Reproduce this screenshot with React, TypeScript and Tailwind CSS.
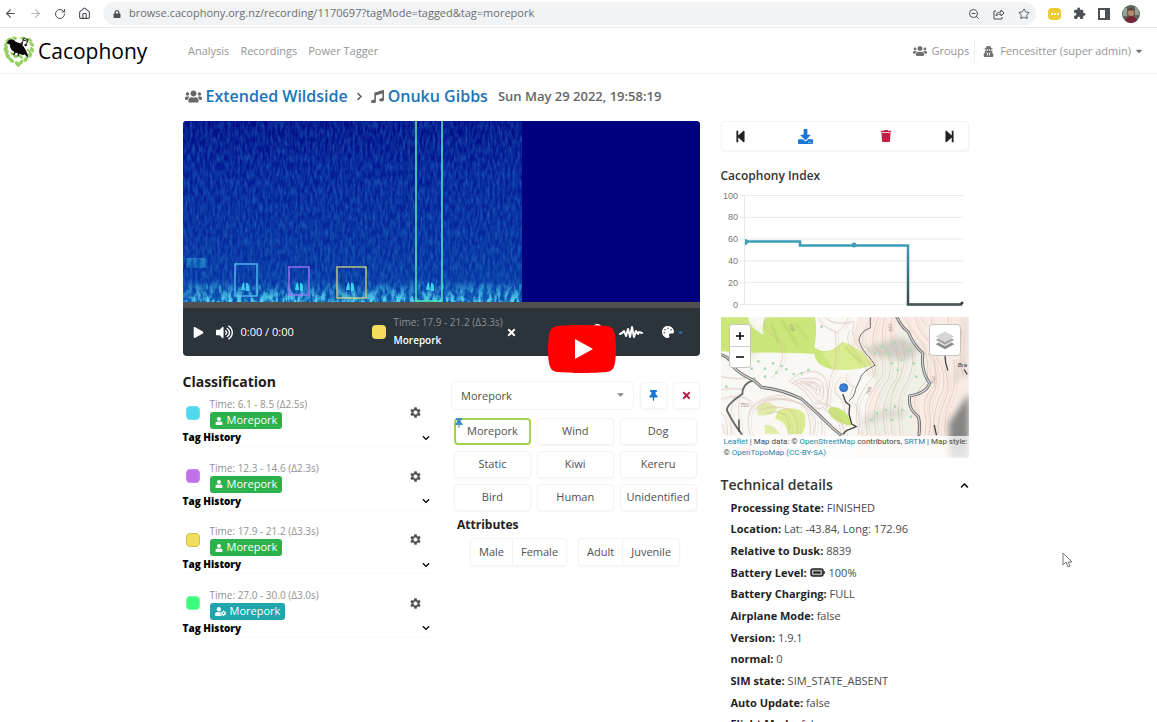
import { useState } from "react";
import { ArrowLeft, ArrowRight, House, RotateCw, Star, ZoomOut } from "lucide-react";
import {
  FaCaretDown,
  FaChevronDown,
  FaChevronRight,
  FaChevronUp,
  FaDownload,
  FaLock,
  FaMusic,
  FaPalette,
  FaPlay,
  FaSearch,
  FaStepBackward,
  FaStepForward,
  FaThumbtack,
  FaTimes,
  FaTrash,
  FaUser,
  FaUserCog,
  FaUserSecret,
  FaUsers,
  FaVolumeUp,
} from "react-icons/fa";
import { MdExtension, MdMoreVert, MdSettings } from "react-icons/md";

type Track = {
  time: string;
  swatch: string;
  badge: string;
  automatic?: boolean;
};

const tracks: Track[] = [
  { time: "6.1 - 8.5 (Δ2.5s)", swatch: "bg-[#4fd8ee] border-[#6adff2]", badge: "bg-[#2bb24a]" },
  { time: "12.3 - 14.6 (Δ2.3s)", swatch: "bg-[#c170ea] border-[#c984ec]", badge: "bg-[#2bb24a]" },
  { time: "17.9 - 21.2 (Δ3.3s)", swatch: "bg-[#f3dd5c] border-[#c9c34c]", badge: "bg-[#2bb24a]" },
  { time: "27.0 - 30.0 (Δ3.0s)", swatch: "bg-[#3dfc7c] border-[#74fca2]", badge: "bg-[#22a5ad]", automatic: true },
];

const tags = ["Morepork", "Wind", "Dog", "Static", "Kiwi", "Kereru", "Bird", "Human", "Unidentified"];

const attributes = [
  ["Male", "Female"],
  ["Adult", "Juvenile"],
];

const details = [
  ["Processing State", "FINISHED"],
  ["Location", "Lat: -43.84, Long: 172.96"],
  ["Relative to Dusk", "8839"],
  ["Battery Level", "100%"],
  ["Battery Charging", "FULL"],
  ["Airplane Mode", "false"],
  ["Version", "1.9.1"],
  ["normal", "0"],
  ["SIM state", "SIM_STATE_ABSENT"],
  ["Auto Update", "false"],
  ["Flight Mode", "false"],
];

function BrowserBar() {
  return (
    <div className="flex h-7 shrink-0 items-center border-b border-[#e6e8ea] bg-white text-[#4d5156]">
      <div className="flex w-[103px] items-center gap-3 pl-1">
        <button aria-label="Back"><ArrowLeft size={13} /></button>
        <button aria-label="Forward" className="text-[#b4b7ba]"><ArrowRight size={13} /></button>
        <button aria-label="Reload"><RotateCw size={12} /></button>
        <button aria-label="Home"><House size={13} /></button>
      </div>
      <div className="flex h-[23px] flex-1 items-center rounded-full bg-[#f1f3f4] pr-[6px] pl-[10px]">
        <FaLock size={8} />
        <input
          aria-label="Address"
          className="ml-2 h-5 flex-1 bg-transparent pb-px text-[11px] leading-5 text-[#6b6f73] outline-none"
          defaultValue="browse.cacophony.org.nz/recording/1170697?tagMode=tagged&tag=morepork"
        />
        <div className="flex items-center gap-[13px]">
          <ZoomOut size={12} />
          <svg viewBox="0 0 12 12" className="size-3" fill="none" stroke="currentColor" strokeLinejoin="round">
            <path d="M3 3H1v8h8V9" />
            <path d="M3 8q0-4 5-4V2l3 3-3 3V6Q5 6 3 8z" />
          </svg>
          <Star size={12} />
        </div>
      </div>
      <div className="flex w-[121px] items-center gap-3 overflow-hidden pl-3">
        <span className="flex h-3 w-[13px] shrink-0 items-center justify-center gap-px rounded-sm bg-[#eccb35]">
          <i className="size-[2px] bg-white" />
          <i className="size-[2px] bg-white" />
          <i className="size-[2px] bg-white" />
        </span>
        <MdExtension size={13} className="shrink-0" />
        <svg viewBox="0 0 12 12" className="size-3 shrink-0">
          <path d="M1 1h10v10H1z" fill="none" stroke="currentColor" strokeWidth="2" />
          <path d="M7 1h4v10H7z" fill="currentColor" />
        </svg>
        <svg viewBox="0 0 18 18" className="size-[18px] shrink-0">
          <clipPath id="avatar"><circle cx="9" cy="9" r="9" /></clipPath>
          <g clipPath="url(#avatar)">
            <path d="M0 0h18v18H0z" fill="#59645a" />
            <path d="M1 3h4v8H1zM13 2h4v8h-4z" fill="#97a18f" />
            <path d="M3 18c0-5 3-7 6-7s6 2 6 7z" fill="#7c2437" />
            <ellipse cx="9" cy="7" rx="3" ry="4" fill="#b98573" />
            <path d="M6 6c0-4 6-4 6 0l-3-1z" fill="#54382f" />
          </g>
        </svg>
        <MdMoreVert size={14} className="shrink-0" />
      </div>
    </div>
  );
}

function Logo() {
  return (
    <a href="#home" className="flex w-[184px] items-center gap-[3px] pl-[3px] text-black">
      <svg viewBox="0 0 96 96" className="size-8">
        <g fill="#93d05f" stroke="#93d05f" strokeWidth="3" strokeLinejoin="round">
          <path d="M8 18q10-12 18-8q-4 9-18 8M4 32q2-12 12-12q2 10-12 12M4 48q-4-12 8-16q6 10-8 16M10 60q-8-8 0-18q12 8 0 18M20 72Q8 70 9 57q14 0 11 15M32 82q-14 0-13-12q12-1 13 12M70 12q10-6 18 6q-14 3-18-6M80 22q12 0 12 12q-12-2-12-12M84 36q10 4 6 16q-11-4-6-16M82 50q8 8 0 18q-10-9 0-18M74 64q4 12-10 16q-2-12 10-16M60 74q2 10-10 16q-6-10 10-16M38 80q12 0 10 15q-12-3-10-15M28 7q10-4 14 4q-8 6-14-4M52 10q8-8 15-1q-6 8-15 1" />
          <path d="M30 62q10-6 14 4q-8 6-14-4M48 60q10 0 10 9q-9 2-10-9M22 54q8-4 12 4q-8 4-12-4M72 42q6 0 8 8q-8 0-8-8" />
        </g>
        <path
          d="M12 22q4-8 13-9q8 0 13 7q14 3 22 12q6 8 11 19q4 8 5 17l-12-10q-3 3-7 1l-8-3-3 9-3-1 2-9-7-2-5 8-3-1 4-9q-15-10-13-22l-9-5z"
          fill="#080808"
        />
        <path d="M58 24l4-14 13 4-5 15M60 15l13 4" fill="none" stroke="#222" strokeWidth="3" />
        <circle cx="56" cy="26" r="4" fill="#222" />
        <circle cx="68" cy="30" r="4" fill="#222" />
      </svg>
      <span className="text-[21px] leading-8 font-medium">Cacophony</span>
    </a>
  );
}

function Navbar() {
  return (
    <nav className="flex h-[46px] shrink-0 items-center border-b border-[#f1f1f1] pt-px text-[11px] text-[#969696]">
      <Logo />
      <div className="flex flex-1 gap-[11px] pl-1">
        <a href="#analysis">Analysis</a>
        <a href="#recordings">Recordings</a>
        <a href="#tagger">Power Tagger</a>
      </div>
      <div className="flex items-center pr-[13px]">
        <a href="#groups" className="flex items-center gap-1 border-r border-[#eeeeee] py-1 pr-[5px]">
          <FaUsers size={14} className="text-[#707070]" />
          Groups
        </a>
        <button className="flex items-center pl-2">
          <FaUserSecret size={11} className="mr-[6px] text-[#707070]" />
          Fencesitter (super admin)
          <FaCaretDown size={10} className="ml-[3px] text-[#777]" />
        </button>
      </div>
    </nav>
  );
}

// Faint calls outside the tagged regions, as [x, height]
const strayCalls = [
  [14, 5],
  [24, 6],
  [37, 5],
  [77, 5],
  [151, 6],
  [198, 5],
  [236, 6],
  [260, 6],
  [299, 7],
  [337, 7],
];

function Spectrogram() {
  return (
    <svg viewBox="0 0 517 181" preserveAspectRatio="none" className="block h-[181px] w-full">
      <defs>
        <filter id="streaks" x="0" y="0" width="1" height="1">
          <feTurbulence type="fractalNoise" baseFrequency="0.4 0.12" numOctaves="2" seed="4" />
          <feColorMatrix values="0 0 0 0 0.04  0 0 0 0 0.36  0 0 0 0 0.75  1.8 0 0 0 -0.55" />
        </filter>
        <filter id="floor" x="0" y="0" width="1" height="1">
          <feTurbulence type="fractalNoise" baseFrequency="0.22 0.1" numOctaves="3" seed="9" />
          <feColorMatrix values="0 0 0 0 0.1  0 0 0 0 0.7  0 0 0 0 0.88  4 0 0 0 -1.6" />
        </filter>
        <linearGradient id="sky" x1="0" y1="0" x2="0" y2="1">
          <stop offset="0" stopColor="#010a84" />
          <stop offset="0.25" stopColor="#031a94" />
          <stop offset="0.6" stopColor="#05279c" />
          <stop offset="0.9" stopColor="#0432a2" />
          <stop offset="1" stopColor="#0753ae" />
        </linearGradient>
        <linearGradient id="rise" x1="0" y1="0" x2="0" y2="1">
          <stop offset="0" stopColor="#000" />
          <stop offset="1" stopColor="#fff" />
        </linearGradient>
        <mask id="floorMask">
          <rect y="158" width="339" height="23" fill="url(#rise)" />
        </mask>
      </defs>
      <rect width="517" height="181" fill="#00007f" />
      <rect width="339" height="181" fill="url(#sky)" />
      <rect width="339" height="181" filter="url(#streaks)" opacity="0.4" />
      <g mask="url(#floorMask)">
        <rect y="156" width="339" height="25" filter="url(#floor)" />
      </g>
      <rect x="3" y="137" width="21" height="10" rx="3" fill="#1476c0" opacity="0.5" />
      <rect x="3" y="137" width="21" height="10" filter="url(#floor)" opacity="0.3" />
      <g fill="#1f9dd0" opacity="0.8">
        {strayCalls.map(([x, h]) => (
          <ellipse key={x} cx={x} cy="166" rx="1" ry={h / 2} />
        ))}
      </g>
      {[62, 116, 167, 247].map((x) => (
        <g key={x} fill="#39d3ee">
          <path d={`M${x - 4} 169q1-7 3-8l1 8zM${x + 1} 162q2-1 3 3v5h-3z`} />
        </g>
      ))}
      <g fill="none" strokeWidth="1.3">
        <rect x="52" y="143" width="22" height="32" stroke="#5cc5f4" />
        <rect x="106" y="146" width="20" height="28" stroke="#a678f5" />
        <rect x="154" y="146" width="29" height="31" stroke="#d8d77b" />
        <rect x="233" y="-4" width="26" height="184" stroke="#50e3b4" strokeWidth="1.6" />
      </g>
    </svg>
  );
}

function Player() {
  return (
    <div className="relative">
      <div className="overflow-hidden rounded bg-[#2b333b]">
        <Spectrogram />
        <div className="h-1.5 bg-[#505050]" />
        <div className="flex h-12 items-center pr-[15px] pl-[10px] text-white">
          <div className="flex w-[179px] items-center gap-3">
            <button aria-label="Play"><FaPlay size={11} /></button>
            <button aria-label="Mute"><FaVolumeUp size={17} /></button>
            <span className="-ml-1 text-[11px]">0:00 / 0:00</span>
          </div>
          <span className="size-[14px] rounded-sm bg-[#f6dc5c]" />
          <div className="ml-2 w-[110px] pb-0.5 text-[10px] leading-[18px]">
            <p className="whitespace-nowrap text-[#8b9095]">Time: 17.9 - 21.2 (Δ3.3s)</p>
            <p className="font-semibold">Morepork</p>
          </div>
          <button aria-label="Deselect" className="ml-0.5"><FaTimes size={11} /></button>
          <div className="ml-auto flex items-center">
            <button aria-label="Zoom" className="mr-[14px] mb-1"><FaSearch size={13} /></button>
            <button aria-label="Waveform" className="mr-[19px]">
              <svg viewBox="0 0 24 14" className="h-[14px] w-6" fill="none" stroke="currentColor" strokeWidth="2" strokeLinejoin="round" strokeLinecap="round">
                <path d="M1 9l2-1 2-2 2 5 2-7 2 8 2-10 2 10 2-6 2 3 1-2 3 1" />
              </svg>
            </button>
            <button aria-label="Colour map" className="flex items-center gap-0.5">
              <FaPalette size={12} />
              <FaCaretDown size={9} className="text-[#2f6da8]" />
            </button>
          </div>
        </div>
      </div>
      <button aria-label="Play video" className="absolute right-[84px] -bottom-[17px] h-12 w-[68px]">
        <svg viewBox="0 0 68 48" className="h-full w-full">
          <path
            d="M66.5 7.7c-.8-2.9-2.5-5.4-5.4-6.2C55.8.1 34 0 34 0S12.2.1 6.9 1.5C4 2.3 2.3 4.8 1.5 7.7.1 13.1 0 24 0 24s.1 10.900 1.500 16.300c.8 2.900 2.500 5.400 5.400 6.200C12.200 47.900 34 48 34 48s21.800-.1 27.100-1.500c2.900-.8 4.600-3.300 5.400-6.200C67.900 34.900 68 24 68 24s-.1-10.900-1.500-16.300z"
            fill="#f00"
          />
          <path d="M45 24 27 14v20" fill="#fff" />
        </svg>
      </button>
    </div>
  );
}

function Classification() {
  return (
    <section>
      <h2 className="text-sm leading-5 font-bold text-[#1c1c1c]">Classification</h2>
      <ul className="grid h-[254px] auto-rows-fr">
        {tracks.map((track) => (
          <li key={track.time} className="pt-1">
            <div className="flex items-center">
              <span className={`ml-[3px] size-[14px] rounded-sm border ${track.swatch}`} />
              <div className="ml-[10px] flex-1">
                <p className="text-[10px] leading-4 text-[#929292]">Time: {track.time}</p>
                <p className={`flex h-[17px] w-fit items-center gap-1 rounded-[3px] px-[5px] text-[11px] text-white ${track.badge}`}>
                  {track.automatic ? <FaUserCog size={11} /> : <FaUser size={8} />}
                  Morepork
                </p>
              </div>
              <button aria-label="Track settings" className="mr-[9px] text-[#555]">
                <MdSettings size={13} />
              </button>
            </div>
            <button className="flex h-[18px] w-full items-center justify-between border-b border-[#fafafa] pr-px text-[10px] font-extrabold text-black">
              Tag History
              <FaChevronDown size={8} />
            </button>
          </li>
        ))}
      </ul>
    </section>
  );
}

function Tagger() {
  const [selected, setSelected] = useState("Morepork");

  return (
    <section className="text-[11px] text-[#505050]">
      <div className="flex items-center gap-1.5">
        <div className="relative flex-1">
          <select
            aria-label="Species"
            value={selected}
            onChange={(e) => setSelected(e.target.value)}
            className="h-[29px] w-full appearance-none rounded border border-[#f4f4f4] bg-white pl-[9px] leading-5"
          >
            {tags.map((tag) => (
              <option key={tag}>{tag}</option>
            ))}
          </select>
          <FaCaretDown size={11} className="pointer-events-none absolute top-2 right-2 text-[#888]" />
        </div>
        <button aria-label="Pin tag" className="flex size-[27px] items-center justify-center rounded border border-[#f4f4f4] text-[#1777d1] shadow-xs">
          <FaThumbtack size={11} />
        </button>
        <button aria-label="Remove tag" className="flex size-[27px] items-center justify-center rounded border border-[#f4f4f4] text-[#b81f45] shadow-xs">
          <FaTimes size={11} />
        </button>
      </div>

      <div className="mt-2 grid grid-cols-3 gap-1.5 px-[3px]">
        {tags.map((tag) => (
          <button
            key={tag}
            onClick={() => setSelected(tag)}
            className={`relative h-[27px] rounded ${
              tag === selected ? "border-2 border-[#a5d14f]" : "border border-[#f3f3f3] shadow-xs"
            }`}
          >
            {tag === "Morepork" && (
              <FaThumbtack size={10} className="absolute -top-[2px] -left-[2px] text-[#3f93bd]" />
            )}
            {tag}
          </button>
        ))}
      </div>

      <h3 className="mt-1 pl-1.5 text-xs leading-5 font-bold text-[#222]">Attributes</h3>
      <div className="mt-[3px] flex gap-[11px] pl-[19px]">
        {attributes.map((group) => (
          <div key={group[0]} className="flex h-7 divide-x divide-[#f3f3f3] rounded border border-[#f3f3f3] shadow-xs">
            {group.map((name) => (
              <button key={name} className="px-2">{name}</button>
            ))}
          </div>
        ))}
      </div>
    </section>
  );
}

function IndexChart() {
  const marks = [100, 80, 60, 40, 20, 0];

  return (
    <svg viewBox="0 0 248 120" className="block w-full">
      <defs>
        <linearGradient id="level" gradientUnits="userSpaceOnUse" x1="0" y1="55" x2="0" y2="114">
          <stop offset="0" stopColor="#3c9db8" />
          <stop offset="1" stopColor="#3b4a4d" />
        </linearGradient>
      </defs>
      {marks.map((mark, i) => (
        <g key={mark}>
          <path d={`M19 ${5.5 + i * 21.8}h223`} stroke="#e9e9e9" />
          <text x="17" y={8.5 + i * 21.8} textAnchor="end" fontSize="9" fill="#777" className="font-['Liberation_Sans']">
            {mark}
          </text>
        </g>
      ))}
      <path d="M23.500 5v110" stroke="#e9e9e9" />
      <path d="M24 51.500h55v4h108v59h54" fill="none" stroke="url(#level)" strokeWidth="2.500" />
      <path d="M187 114.500h54" stroke="#45585b" strokeWidth="1.500" />
      <path d="M24 49a3 3 0 0 1 0 6z" fill="#3c9db8" />
      <circle cx="133" cy="55" r="2.500" fill="#3c9db8" />
      <circle cx="241" cy="113" r="1.500" fill="#2f3c3e" />
    </svg>
  );
}

// Elevation lines of the valley floor and the two ridges
const contours = [
  "M150 22q-12 38 34 62q34 36 8 90q-8 22-24 30",
  "M310 22q10 30 50 42q6 40 2 100q-20 40-22 80q-2 44-10 56",
  "M330 22q18 26 90 12M400 22q-10 30-40 50",
  "M470 22q-30 40-28 80q50 40 38 90q-34 40-52 80q-10 50 6 100",
  "M490 22q-18 44-16 80q40 48 26 98q-34 44-48 90q-4 40 6 84",
  "M510 22q-14 46-6 84q32 44 18 98q-34 44-44 100q-2 30 6 70",
  "M530 22q-8 50 6 90q24 40 8 94q-30 40-38 90q-4 40 6 78",
  "M560 90q20 50-4 110q-26 40-30 96q0 40 6 78",
  "M590 120q10 40-10 90q-30 40-30 90q2 40 6 74",
  "M570 22q20 50 54 80q20 50 12 110q-44 40-36 80q14 40 8 82",
  "M600 22q14 50 44 76q24 60 14 130q-40 40-28 80q8 30 0 66",
  "M640 130q36 50 20 110q-24 40-14 76q4 30-4 58",
  "M664 140q34 50 18 106q-30 50-24 128",
  "M690 180q20 50 0 90q-22 50-20 104",
  "M716 150q12 70-10 120q-20 50-16 104",
  "M740 60q-8 100 6 140M650 22q-4 20 6 22M620 22q4 20 12 22M700 22v24",
  "M222 214q50 20 80 80q40 10 36-60q-4-40-40-50q-40-6-76 30",
  "M238 214q40 16 68 60q24 4 20-40q-8-34-40-30q-30 0-48 10",
  "M256 216q34 12 52 40q12 0 6-26q-14-24-58-14",
  "M272 220q20 6 34 22q4-10-4-18q-12-10-30-4",
  "M120 300q30-40 100-34q60 20 80 60q4 30-6 48",
  "M110 290q30-34 108-36q74 20 100 74q6 20 2 46",
  "M100 310q40-70 160-28q30 30 26 92",
  "M136 300q40-20 90 0q30 40 20 74M150 310q30-12 60 4q20 30 10 60",
  "M18 200q60 10 80 0M18 240q40-10 66 0M18 268q30-14 60-8q40 10 28 40q-14 40 0 74",
  "M18 310q20 10 20 64M18 340q10 10 10 34M60 260q-20 40-8 114M76 250q-10 50 0 124",
  "M380 200q-24 20-20 50q30 20 30 60M396 190q-10 30 20 40q-20 40-6 60",
  "M406 60q-20 30 8 60q30 30 50 80M418 40q-16 40 20 80q30 40 40 80",
  "M300 280q70-10 90 94M330 300q40 10 50 74M420 280q20 40 10 94",
];

const scrub = [
  [60, 170], [84, 160], [110, 176], [130, 154], [150, 176], [174, 160], [200, 168], [90, 200], [118, 206],
  [150, 200], [184, 188], [214, 178], [236, 192], [260, 190], [40, 150], [34, 230], [500, 110], [520, 130],
  [540, 96], [560, 150], [584, 120], [596, 160], [548, 180], [604, 200], [530, 160], [480, 130], [540, 290],
  [512, 300], [486, 310], [530, 330], [562, 300], [588, 320], [470, 330], [320, 50], [280, 180],
];

function TopoMap() {
  return (
    <div className="relative overflow-hidden">
      <svg viewBox="18 21 744 423" className="block w-full">
        <defs>
          <filter id="soften" x="-20%" y="-20%" width="140%" height="140%">
            <feGaussianBlur stdDeviation="9" />
          </filter>
        </defs>
        <path d="M18 21h744v423H18z" fill="#f9f8f5" />
        <path d="M430 21h330v423H420q30-110 60-230q-20-90-70-110z" fill="#f9ece4" />
        <path d="M560 60l70 70 10 90-60 50 20 100H440l60-110-30-70z" fill="#f0f1e6" />
        <g filter="url(#soften)">
          <path d="M440 120l110-40 70 30-40 40-90-10z" fill="#cfcfc5" />
          <path d="M440 330q60-40 130-30v24q-60-10-120 24z" fill="#dadbd1" />
          <path d="M762 250l-60 90v104h60z" fill="#858585" />
          <path d="M762 21h-30l10 100-40 100 60-20z" fill="#eadfd8" />
          <path d="M90 22l60 60-30 60h-60z" fill="#e9eed5" />
        </g>
        <path
          d="M18 22h82q0 30 46 52q-10-30 8-52h146q8 40-2 90q40 30 84-16q60 20 90 68q-50 20-120 14q-50-10-54-46q-100-6-180-4l-100-4z"
          fill="#cbe77c"
        />
        <g fill="#dbeb92">
          <path d="M320 130q50-10 64-34q60 20 90 68q-50 20-120 14z" />
          <path d="M190 300q60-16 80 14q6 40-10 58h-40q-8-40-40-46z" />
          <path d="M148 344q30-2 46 28h-44zM126 290q30-26 62 4q-10 26-60 22z" fill="#e2ecab" />
        </g>
        <path d="M340 296q20-14 50 10q20 20 18 42q-50-10-66-36z" fill="#cbe77c" />
        <path d="M200 30l50 80M390 110l50 50M240 40l40 50M170 40l20 60" stroke="#bbdb68" strokeWidth="10" opacity="0.5" />
        <g fill="none" stroke="#cfaa9a" strokeWidth="2">
          <g opacity="0.65">
            {contours.map((d) => (
              <path key={d} d={d} />
            ))}
          </g>
          <g opacity="0.3" transform="translate(9 3)">
            {contours.map((d) => (
              <path key={d} d={d} />
            ))}
          </g>
        </g>
        <g fill="#a9dab2">
          {scrub.map(([x, y]) => (
            <circle key={`${x}-${y}`} cx={x} cy={y} r="4" />
          ))}
        </g>
        <g fill="none" strokeLinejoin="round" strokeLinecap="round">
          <g stroke="#6b6b6b" strokeWidth="9">
            <path d="M18 134q30 8 40 40q20 20 60 38l22 20q60 6 118 34q50 44 76 70q20 20 42 38" />
            <path d="M546 22q14 30 34 44q16 40 44 64q-8 50 20 90q-10 30-60 38q-6 40 26 62q6 20 2 54" />
            <path d="M112 212q-30 10-30 40q-50 34-46 50q20 40 44 70" strokeWidth="6" />
          </g>
          <g stroke="#d0d0d0" strokeWidth="4">
            <path d="M18 134q30 8 40 40q20 20 60 38l22 20q60 6 118 34q50 44 76 70q20 20 42 38" />
            <path d="M546 22q14 30 34 44q16 40 44 64q-8 50 20 90q-10 30-60 38q-6 40 26 62q6 20 2 54" />
          </g>
          <g stroke="#444" strokeWidth="4">
            <path d="M384 254l8 22 12 10-2 26 8 30 14 8-30 12-10 10" />
            <path d="M690 138l2 20 6 22M748 180l8 12M72 330v34M658 346l6 28" />
          </g>
          <path d="M466 24v30q-30 10-34 36q10 34 30 50l18 26q-40 20-44 40l-14 30q-4 26-20 36" stroke="#666" strokeWidth="3" strokeDasharray="10 3" />
        </g>
        <circle cx="386" cy="233" r="12" fill="#3d7fd6" stroke="#2c68bd" strokeWidth="3" />
        <g fill="#a1897c" fontSize="15" className="font-['Liberation_Sans']">
          <text x="220" y="44" transform="rotate(60 220 44)">750</text>
          <text x="518" y="40" transform="rotate(80 518 40)">700</text>
          <text x="76" y="292">750</text>
          <text x="462" y="256" transform="rotate(-70 462 256)">700</text>
          <text x="658" y="224" transform="rotate(-80 658 224)">700</text>
        </g>
        <text x="728" y="172" fontSize="18" fontStyle="italic" fill="#333" className="font-['Liberation_Sans']">Bra</text>
      </svg>

      <div className="absolute top-[7px] left-2 w-[22px] divide-y divide-[#ccc] rounded-[3px] border border-[#c5c5c0] bg-white text-black">
        <button aria-label="Zoom in" className="flex h-[22px] w-full items-center justify-center">
          <svg viewBox="0 0 10 10" className="size-[10px]"><path d="M5 1v8M1 5h8" stroke="currentColor" strokeWidth="1.500" /></svg>
        </button>
        <button aria-label="Zoom out" className="flex h-5 w-full items-center justify-center">
          <svg viewBox="0 0 10 10" className="size-[10px]"><path d="M1 5h8" stroke="currentColor" strokeWidth="1.500" /></svg>
        </button>
      </div>
      <button aria-label="Layers" className="absolute top-[7px] right-2 flex size-8 items-center justify-center rounded border border-[#c5c5c5] bg-white">
        <svg viewBox="0 0 26 26" className="size-[22px]">
          <path d="m13 24-11-6 3-2 8 4 8-4 3 2z" fill="#8c8c8c" />
          <path d="m13 19-11-6 3-2 8 4 8-4 3 2z" fill="#aaa" />
          <path d="m13 15-11-6 11-6 11 6z" fill="#d6d6d6" />
        </svg>
      </button>
      <p className="absolute inset-x-0 bottom-0 bg-white/75 pl-[3px] font-['Roboto',sans-serif] text-[8px] leading-[11px] whitespace-nowrap text-[#444]">
        <a href="#leaflet" className="text-[#2887a8]">Leaflet</a> | Map data: ©{" "}
        <a href="#osm" className="text-[#2887a8]">OpenStreetMap</a> contributors,{" "}
        <a href="#srtm" className="text-[#2887a8]">SRTM</a> | Map style:
        <br />© <a href="#otm" className="text-[#2887a8]">OpenTopoMap</a>{" "}
        <a href="#licence" className="text-[#2887a8]">(CC-BY-SA)</a>
      </p>
    </div>
  );
}

function BatteryIcon() {
  return (
    <svg viewBox="0 0 15 9" className="mr-1 inline h-[9px] w-[15px] align-baseline">
      <rect x="1" y="1" width="12" height="7" rx="2" fill="#aaa" stroke="#222" strokeWidth="1.500" />
      <path d="M3.500 4.500h7" stroke="#222" strokeWidth="2" />
      <path d="M14 3v3" stroke="#222" strokeWidth="1.500" />
    </svg>
  );
}

function TechnicalDetails() {
  return (
    <section className="mt-4">
      <button className="flex w-full items-center justify-between text-sm leading-[22px] font-semibold text-[#333]">
        Technical details
        <FaChevronUp size={9} className="text-black" />
      </button>
      <ul className="grid h-[239px] auto-rows-fr items-center pt-px pl-[10px] text-[11px] leading-5 text-[#4a4a4a]">
        {details.map(([name, value]) => (
          <li key={name}>
            <strong className="font-bold text-[#1f1f1f]">{name}:</strong>{" "}
            {name === "Battery Level" && <BatteryIcon />}
            {value}
          </li>
        ))}
      </ul>
    </section>
  );
}

export default function App() {
  return (
    <div className="relative flex h-screen flex-col overflow-hidden bg-white font-['Open_Sans',sans-serif]">
      <BrowserBar />
      <Navbar />
      <main className="min-h-0 flex-1 pr-1.5">
        <div className="mx-auto max-w-[786px] pt-[10px]">
          <h1 className="flex h-6 items-center pl-[2px] text-base font-semibold text-[#666]">
            <FaUsers size={17} />
            <a href="#group" className="ml-1 text-[#1a73b9]">Extended Wildside</a>
            <FaChevronRight size={9} className="mx-[7px] text-[#555]" />
            <FaMusic size={13} />
            <a href="#station" className="ml-1 text-[#1a73b9]">Onuku Gibbs</a>
            <time className="ml-[10px] pt-0.5 text-[13px]">Sun May 29 2022, 19:58:19</time>
          </h1>

          <div className="mt-[13px] flex gap-[21px]">
            <div className="min-w-0 flex-1">
              <Player />
              <div className="mt-4 grid grid-cols-2 gap-5">
                <Classification />
                <div className="pt-[9px]">
                  <Tagger />
                </div>
              </div>
            </div>

            <aside className="w-[248px] shrink-0">
              <div className="flex h-[30px] items-center justify-between rounded border border-[#f3f3f3] px-3 shadow-xs">
                <button aria-label="Previous recording" className="text-[#222]"><FaStepBackward size={13} /></button>
                <button aria-label="Download" className="text-[#1777d1]"><FaDownload size={15} /></button>
                <button aria-label="Delete" className="pl-4 text-[#c41e45]"><FaTrash size={12} /></button>
                <button aria-label="Next recording" className="text-[#222]"><FaStepForward size={13} /></button>
              </div>
              <h2 className="mt-[15px] mb-1 text-xs leading-5 font-semibold text-[#333]">Cacophony Index</h2>
              <IndexChart />
              <div className="mt-[7px]">
                <TopoMap />
              </div>
              <TechnicalDetails />
            </aside>
          </div>
        </div>
      </main>

      <svg viewBox="0 0 10 16" className="absolute top-[552px] left-[1062px] h-4 w-[10px]">
        <path d="M1 1v12l3-3 2 5 2-1-2-4h4z" fill="#fff" stroke="#777" strokeLinejoin="round" />
      </svg>
    </div>
  );
}
